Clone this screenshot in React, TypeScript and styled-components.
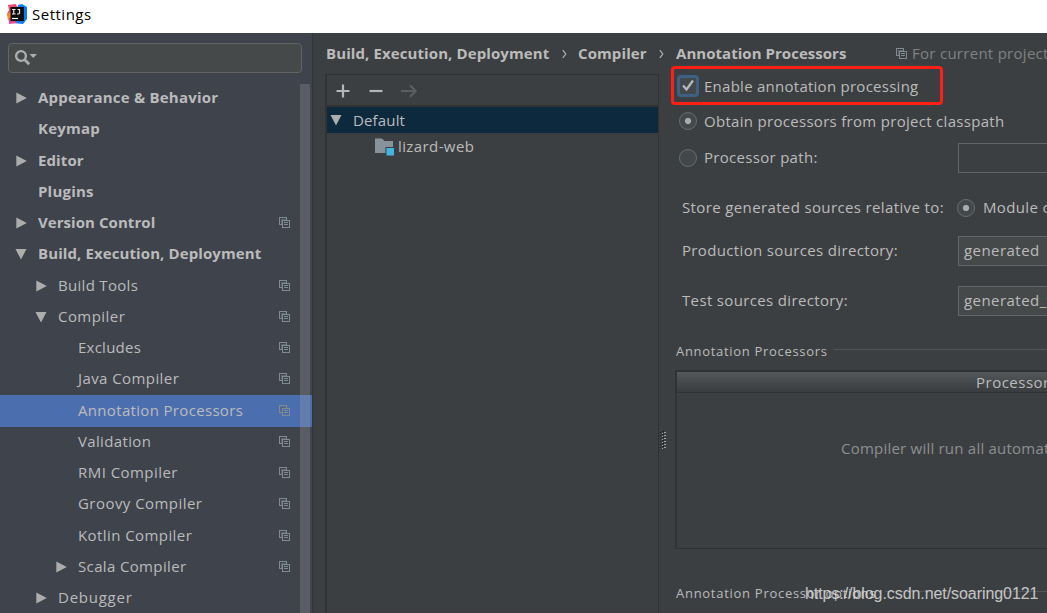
import React from "react";
import styled, { createGlobalStyle } from "styled-components";

const Global = createGlobalStyle`
  * { box-sizing: border-box; }
  html, body { margin: 0; padding: 0; overflow: hidden; }
  body { font-family: "Open Sans", "Noto Sans", sans-serif; font-size: 15px; color: #bbbbbb; background: #3c3f41; }
  svg { display: block; flex: none; }
`;

const Window = styled.div`
  position: relative;
  width: 1047px;
  height: 613px;
  overflow: hidden;
  display: flex;
  flex-direction: column;
  background: #3c3f41;
`;
const TitleBar = styled.header`
  height: 33px;
  flex: none;
  display: flex;
  align-items: flex-start;
  gap: 5px;
  padding: 4px 0 0 7px;
  background: #ffffff;
  color: #000000;
`;
const Title = styled.span`
  line-height: 21px;
  font-size: 15px;
  letter-spacing: 0.5px;
`;
const Body = styled.div`
  flex: 1;
  min-height: 0;
  display: flex;
`;
const Sidebar = styled.aside`
  width: 313px;
  flex: none;
  display: flex;
  flex-direction: column;
  background: #3f434c;
  border-right: 1px solid #323437;
`;
const Search = styled.div`
  width: 294px;
  height: 30px;
  margin: 10px 0 0 8px;
  flex: none;
  display: flex;
  align-items: center;
  padding-left: 5px;
  border: 1px solid #646464;
  border-radius: 4px;
  background: #45494a;
`;
const Tree = styled.div`
  position: relative;
  margin-top: 9.5px;
  flex: 1;
  min-height: 0;
  overflow: hidden;
`;
const TreeRow = styled.div<{ $level: number; $selected?: boolean }>`
  height: ${(p) => (p.$selected ? 32 : 31.25)}px;
  margin-bottom: ${(p) => (p.$selected ? -0.75 : 0)}px;
  display: flex;
  align-items: center;
  padding: 0 22px 0 ${(p) => 15 + p.$level * 20}px;
  background: ${(p) => (p.$selected ? "#4b6eaf" : "transparent")};
`;
const Twist = styled.span`
  width: 23px;
  flex: none;
`;
const Label = styled.span<{ $bold?: boolean; $ls?: number; $color?: string; $up?: boolean }>`
  white-space: nowrap;
  line-height: 20px;
  padding-bottom: ${(p) => (p.$up ? 2 : 0)}px;
  font-weight: ${(p) => (p.$bold ? 700 : 400)};
  letter-spacing: ${(p) => p.$ls ?? (p.$bold ? 0.1 : 0.35)}px;
  color: ${(p) => p.$color ?? "#bbbbbb"};
`;
const Spacer = styled.span`
  flex: 1;
`;
const ScrollThumb = styled.div`
  position: absolute;
  top: 1.5px;
  right: 2px;
  bottom: 0;
  width: 10px;
  background: rgba(166, 166, 166, 0.27);
`;
const Main = styled.main`
  flex: 1;
  min-width: 0;
  display: flex;
  flex-direction: column;
  padding-left: 12px;
`;
const Crumbs = styled.div`
  height: 41px;
  flex: none;
  display: flex;
  align-items: center;
  padding-left: 1px;
  white-space: nowrap;
`;
const Crumb = styled(Label)<{ $w: number }>`
  width: ${(p) => p.$w}px;
  flex: none;
`;
const Chevron = styled.span<{ $w: number }>`
  width: ${(p) => p.$w}px;
  flex: none;
`;
const ScopeLabel = styled(Label)`
  padding-left: 5px;
`;
const Columns = styled.div`
  flex: 1;
  min-height: 0;
  display: flex;
`;
const Profiles = styled.section`
  width: 334px;
  flex: none;
  border: 1px solid #323232;
  border-left-width: 2px;
  border-bottom: 0;
`;
const Toolbar = styled.div`
  height: 32px;
  display: flex;
  align-items: center;
  gap: 17px;
  padding: 2px 0 0 8px;
  border-bottom: 2px solid #323232;
`;
const ProfileRow = styled.div<{ $selected?: boolean; $indent: number; $gap: number }>`
  height: 26px;
  display: flex;
  align-items: center;
  gap: ${(p) => p.$gap}px;
  padding-left: ${(p) => p.$indent}px;
  background: ${(p) => (p.$selected ? "#0d293e" : "transparent")};
`;
const Splitter = styled.div`
  width: 16px;
  flex: none;
  padding: 356px 0 0 1px;
`;
const Form = styled.section`
  flex: 1;
  min-width: 0;
  display: flex;
  flex-direction: column;
`;
const FormRow = styled.div<{ $h: number; $indent?: number; $gap?: number }>`
  height: ${(p) => p.$h}px;
  flex: none;
  display: flex;
  align-items: center;
  gap: ${(p) => p.$gap ?? 7}px;
  padding-left: ${(p) => p.$indent ?? 4}px;
  white-space: nowrap;
`;
const FieldLabel = styled(Label)<{ $w: number }>`
  width: ${(p) => p.$w}px;
  flex: none;
`;
const Radio = styled.span<{ $on?: boolean }>`
  width: 18px;
  height: 18px;
  flex: none;
  border-radius: 50%;
  border: 1px solid #6b6d6e;
  background: ${(p) => (p.$on ? "radial-gradient(circle, #a9aaaa 0 2.7px, #43494a 3.6px)" : "#43494a")};
`;
const RadioLabel = styled(Label)`
  padding-left: 8px;
`;
const CheckBox = styled.span`
  width: 22px;
  height: 22px;
  flex: none;
  display: flex;
  align-items: center;
  justify-content: center;
  border-radius: 4px;
  background: #43494a;
  border: 3px solid #3d6185;
`;
const Field = styled.div<{ $disabled?: boolean }>`
  width: 130px;
  height: 30px;
  flex: none;
  display: flex;
  align-items: center;
  padding-left: 5px;
  border: 1px solid #646464;
  background: ${(p) => (p.$disabled ? "#3c3f41" : "#45494a")};
`;
const Group = styled.div<{ $mt: number; $gap: number }>`
  height: 20px;
  margin-top: ${(p) => p.$mt}px;
  flex: none;
  display: flex;
  align-items: center;
  gap: ${(p) => p.$gap}px;
  white-space: nowrap;
  font-size: 13px;
  padding-left: 1px;
  &::after { content: ""; flex: 1; height: 1px; margin-top: -3px; background: #515658; }
`;
const Table = styled.div`
  height: 179px;
  margin-top: 9px;
  flex: none;
  border: 1px solid #323232;
  border-width: 2px 0 1px 2px;
  overflow: hidden;
`;
const TableHead = styled.div`
  height: 21px;
  display: flex;
  align-items: center;
  padding-left: 299px;
  background: linear-gradient(#54585a, #393c3e);
  border-bottom: 1px solid #323232;
`;
const TableEmpty = styled.div`
  padding: 45px 0 0 164px;
  white-space: nowrap;
`;
const Highlight = styled.div`
  position: absolute;
  left: 671px;
  top: 66px;
  width: 272px;
  height: 39px;
  border: 3px solid #ff1f14;
  border-radius: 4px;
`;
const Watermark = styled.div`
  position: absolute;
  left: 805px;
  top: 584px;
  line-height: 20px;
  font-family: "Liberation Sans", Arial, sans-serif;
  font-size: 16px;
  letter-spacing: -0.07px;
  color: rgba(225, 225, 225, 0.84);
  white-space: nowrap;
`;

const Arrow = ({ open }: { open?: boolean }) => (
  <svg width="12" height="12" viewBox="0 0 12 12" fill="#adadad">
    {open ? <path d="M.5 1h11L6 11.5z" /> : <path d="M1.300 .5v11L11.800 6z" />}
  </svg>
);

const CopySvg = styled.svg`
  margin-bottom: 1px;
`;
const CopyIcon = () => (
  <CopySvg width="11" height="11" viewBox="0 0 11 11" fill="none" shapeRendering="crispEdges">
    <path d="M2 2h6v1H3v5H2z" fill="#5d666d" />
    <path d="M2.500 7.500h-2v-7h7v2M3.500 3.500h7v7h-7zM5 5.500h4M5 7.500h4" stroke="#7f8b91" />
  </CopySvg>
);

const Logo = () => (
  <svg width="20" height="20" viewBox="0 0 20 20">
    <path d="M1 1l8-1 3 8-8 11-2-1-1-5L0 10l2-4z" fill="#f4466a" />
    <path d="M0 10l5-3v9H1z" fill="#f98b2b" />
    <path d="M11 1l4-1 5 3v12l-4 5-10-1 2-4z" fill="#087cfa" />
    <path d="M2 14h5l3 5-8 1z" fill="#e9478d" />
    <rect x="3.500" y="3" width="13.500" height="14" fill="#0c0c0c" />
    <path d="M5 5.500h3.600M6.800 5.500v4.500M5 10h3.600M10.500 5.500h2.500M12.500 5v4.200l-.8.800H10" fill="none" stroke="#e8e8e8" strokeWidth="1.200" />
    <path d="M5 14.500h6" stroke="#fff" strokeWidth="1.200" />
  </svg>
);

const SearchIcon = () => (
  <svg width="24" height="18" viewBox="0 0 24 18" fill="none" stroke="#adadad">
    <circle cx="7" cy="7" r="4.900" strokeWidth="2.400" />
    <path d="M10.500 10.500l4.700 4.700" strokeWidth="2.800" />
    <path d="M15.500 5h7.500l-3.750 4z" fill="#adadad" stroke="none" />
  </svg>
);

const PlusIcon = () => (
  <svg width="16" height="16" viewBox="0 0 16 16" stroke="#b4b6b7" strokeWidth="2.200"><path d="M8 1.500v13M1.500 8h13" /></svg>
);
const MinusIcon = () => (
  <svg width="16" height="16" viewBox="0 0 16 16" stroke="#b4b6b7" strokeWidth="2.200"><path d="M1.500 8h13" /></svg>
);
const MoveIcon = () => (
  <svg width="17" height="16" viewBox="0 0 17 16" fill="none" stroke="#5c5f60" strokeWidth="2"><path d="M-1 8h16M9 2.300L14.700 8 9 13.700" /></svg>
);
const ModuleIcon = () => (
  <svg width="20" height="19" viewBox="0 0 20 19">
    <path d="M0 1.500h7l2.500 2.500H18v12H0z" fill="#87939a" />
    <path d="M10.500 10h9.500v9h-9.500z" fill="#3c3f41" />
    <path d="M11.500 11h7.500v7.500h-7.500z" fill="#40b6e0" />
  </svg>
);
const ChevronIcon = () => (
  <svg width="5" height="10" viewBox="0 0 5 10" fill="none" stroke="#b0b2b3" strokeWidth="1.200"><path d="M.8 1.200L3.800 5 .8 8.800" /></svg>
);
const GripIcon = () => (
  <svg width="7" height="20" viewBox="0 0 7 20" shapeRendering="crispEdges">
    {[0, 3, 6, 9, 12, 15].map((y) => (
      <g key={y}>
        <path d={`M0 ${y + 2.5}h1M2 ${y + 1.5}h2`} stroke="#202223" />
        <path d={`M2 ${y + 3.5}h1M4 ${y + 2.5}h2`} stroke="#a3a5a6" />
      </g>
    ))}
  </svg>
);

type Node = { text: string; level: number; state?: "open" | "closed"; bold?: boolean; copy?: boolean; selected?: boolean; ls?: number };
const nodes: Node[] = [
  { text: "Appearance & Behavior", level: 0, state: "closed", bold: true, ls: 0.22 },
  { text: "Keymap", level: 0, bold: true, ls: 0.2 },
  { text: "Editor", level: 0, state: "closed", bold: true },
  { text: "Plugins", level: 0, bold: true, ls: 0.2 },
  { text: "Version Control", level: 0, state: "closed", bold: true, copy: true, ls: 0.06 },
  { text: "Build, Execution, Deployment", level: 0, state: "open", bold: true },
  { text: "Build Tools", level: 1, state: "closed", copy: true, ls: 0.3 },
  { text: "Compiler", level: 1, state: "open", copy: true, ls: 0.45 },
  { text: "Excludes", level: 2, copy: true, ls: 0.25 },
  { text: "Java Compiler", level: 2, copy: true, ls: 0.42 },
  { text: "Annotation Processors", level: 2, copy: true, selected: true, ls: 0.33 },
  { text: "Validation", level: 2, copy: true },
  { text: "RMI Compiler", level: 2, copy: true, ls: 0.45 },
  { text: "Groovy Compiler", level: 2, copy: true, ls: 0.45 },
  { text: "Kotlin Compiler", level: 2, copy: true, ls: 0.42 },
  { text: "Scala Compiler", level: 2, state: "closed", copy: true, ls: 0.36 },
  { text: "Debugger", level: 1, state: "closed", ls: 0.75 },
];

export default function App() {
  return (
    <Window>
      <Global />
      <TitleBar>
        <Logo />
        <Title>Settings</Title>
      </TitleBar>
      <Body>
        <Sidebar>
          <Search><SearchIcon /></Search>
          <Tree>
            {nodes.map((n) => (
              <TreeRow key={n.text} $level={n.level} $selected={n.selected}>
                <Twist>{n.state && <Arrow open={n.state === "open"} />}</Twist>
                <Label $up $bold={n.bold} $ls={n.ls}>{n.text}</Label>
                <Spacer />
                {n.copy && <CopyIcon />}
              </TreeRow>
            ))}
            <ScrollThumb />
          </Tree>
        </Sidebar>
        <Main>
          <Crumbs>
            <Crumb $up $bold $w={236}>Build, Execution, Deployment</Crumb>
            <Chevron $w={16}><ChevronIcon /></Chevron>
            <Crumb $up $bold $w={81}>Compiler</Crumb>
            <Chevron $w={17}><ChevronIcon /></Chevron>
            <Crumb $up $bold $ls={0.04} $w={220}>Annotation Processors</Crumb>
            <CopyIcon />
            <ScopeLabel $up $color="#808283" $ls={0.28}>For current project</ScopeLabel>
          </Crumbs>
          <Columns>
            <Profiles>
              <Toolbar><PlusIcon /><MinusIcon /><MoveIcon /></Toolbar>
              <ProfileRow $selected $indent={3} $gap={11}><Arrow open /><Label $ls={0.15}>Default</Label></ProfileRow>
              <ProfileRow $indent={48} $gap={3}><ModuleIcon /><Label $ls={0.4}>lizard-web</Label></ProfileRow>
            </Profiles>
            <Splitter><GripIcon /></Splitter>
            <Form>
              <FormRow $h={24} $indent={2} $gap={5}>
                <CheckBox>
                  <svg width="16" height="16" viewBox="0 0 16 16" fill="none" stroke="#b8babb" strokeWidth="2.200"><path d="M3 7.500l3.500 4L13 2.500" /></svg>
                </CheckBox>
                <Label $ls={0.26}>Enable annotation processing</Label>
              </FormRow>
              <FormRow $h={46}><Radio $on /><Label $ls={0.3}>Obtain processors from project classpath</Label></FormRow>
              <FormRow $h={28}><Radio /><FieldLabel $up $ls={0.3} $w={247}>Processor path:</FieldLabel><Field $disabled /></FormRow>
              <FormRow $h={71} $indent={7} $gap={0}><FieldLabel $up $ls={0.37} $w={275}>Store generated sources relative to:</FieldLabel><Radio $on /><RadioLabel $up>Module content root</RadioLabel></FormRow>
              <FormRow $h={15} $indent={7} $gap={1}><FieldLabel $up $w={275}>Production sources directory:</FieldLabel><Field><Label $up $ls={0.45}>generated</Label></Field></FormRow>
              <FormRow $h={85} $indent={7} $gap={1}><FieldLabel $up $w={275}>Test sources directory:</FieldLabel><Field><Label $up $ls={0.45}>generated_tests</Label></Field></FormRow>
              <Group $mt={-2} $gap={6}><Label $ls={0.69}>Annotation Processors</Label></Group>
              <Table>
                <TableHead><Label $ls={0.5}>Processor FQ Name</Label></TableHead>
                <TableEmpty><Label $color="#8d8f90" $ls={0.22}>Compiler will run all automatically discovered processors</Label></TableEmpty>
              </Table>
              <Group $mt={34} $gap={9}><Label $ls={0.72}>Annotation Processor options</Label></Group>
            </Form>
          </Columns>
        </Main>
      </Body>
      <Highlight />
      <Watermark>https://blog.csdn.net/soaring0121</Watermark>
    </Window>
  );
}
